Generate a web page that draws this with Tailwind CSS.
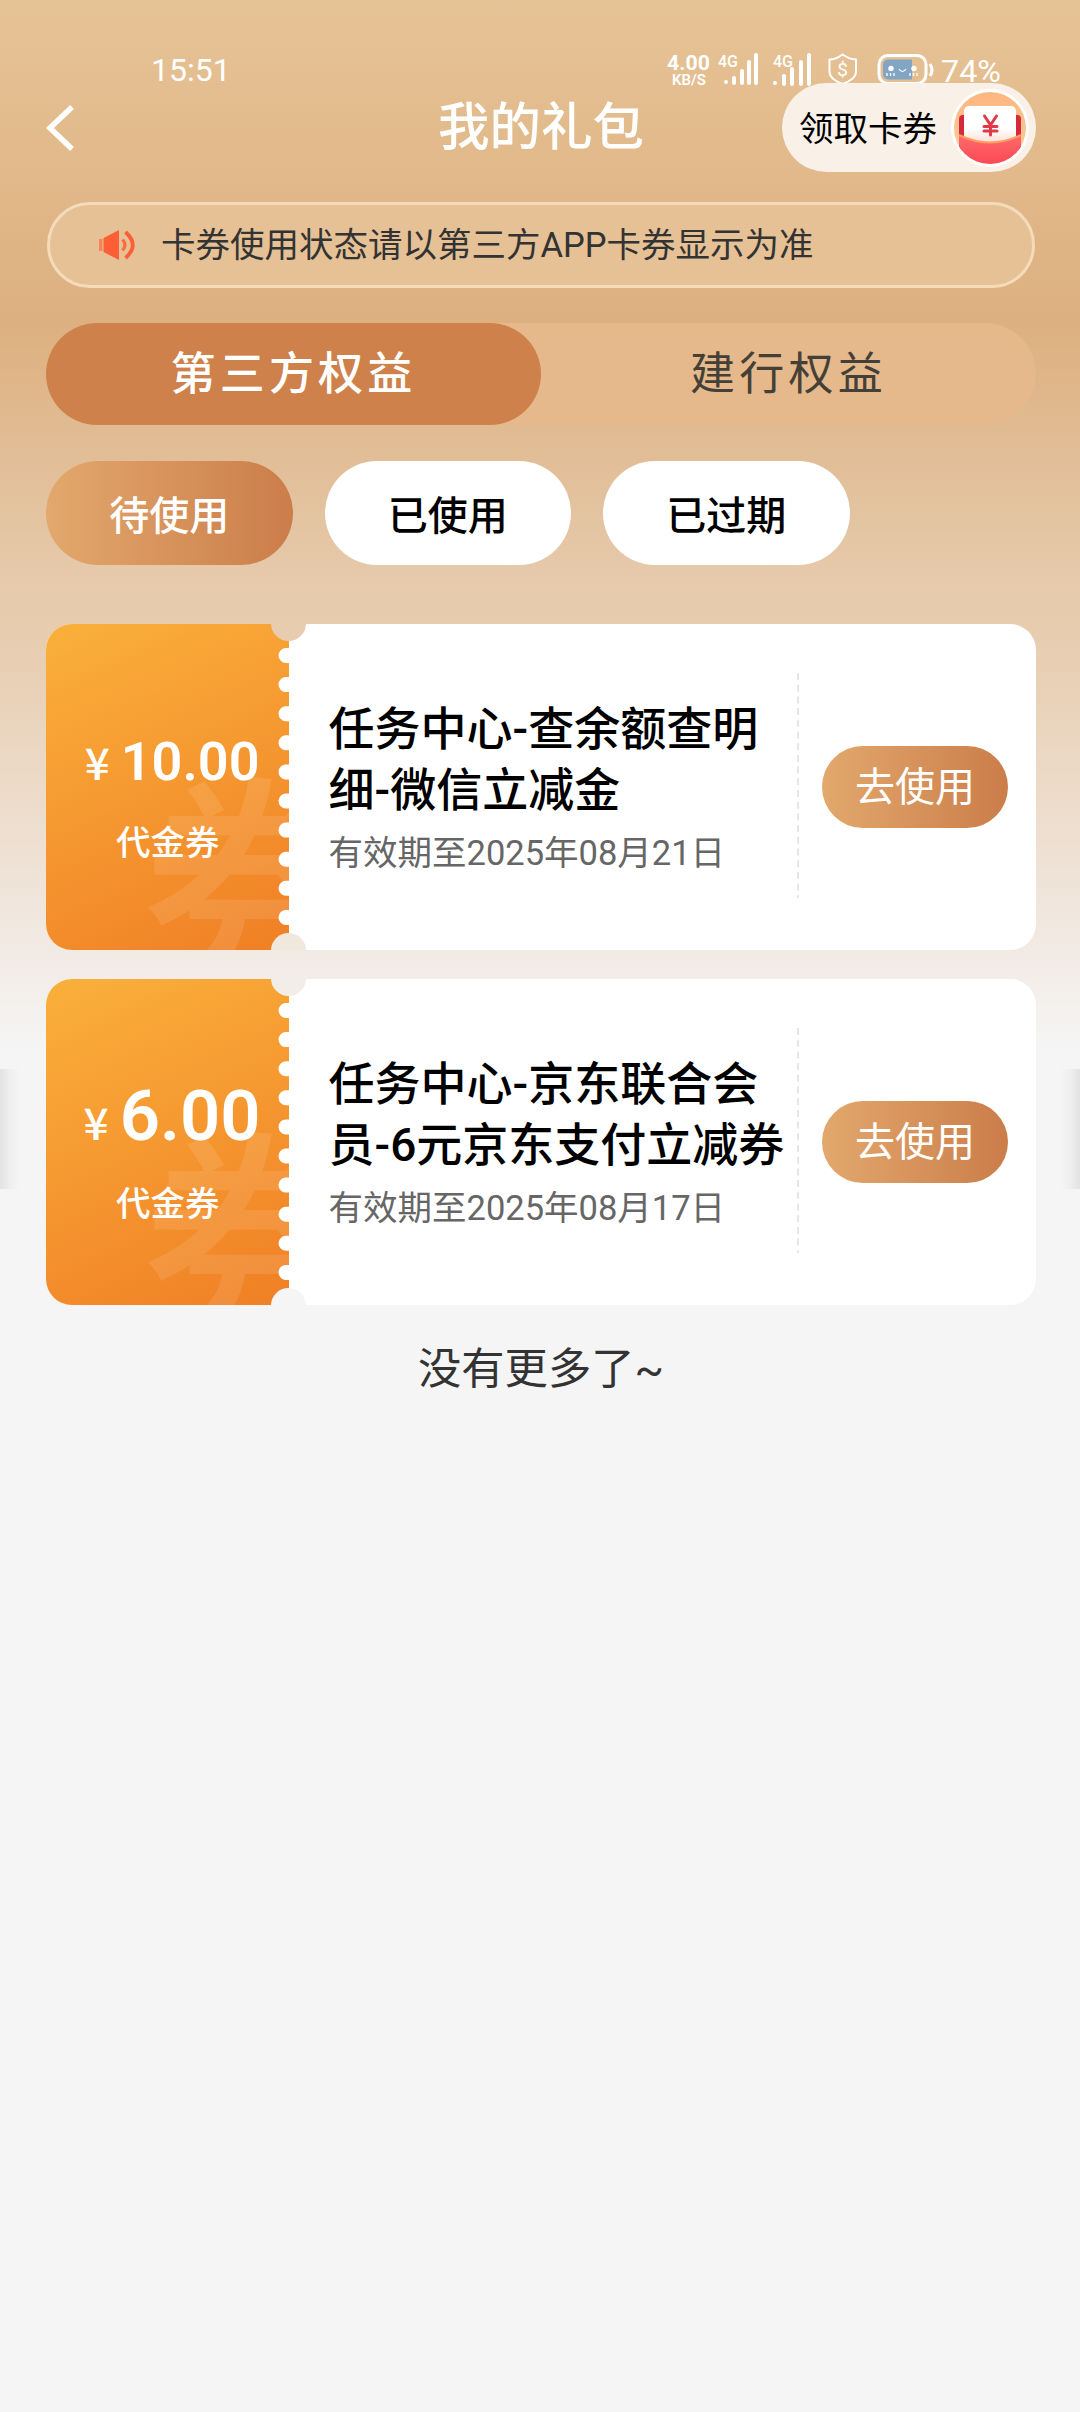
<!DOCTYPE html>
<html lang="zh-CN">
<head>
<meta charset="utf-8">
<title>我的礼包</title>
<script src="https://cdn.jsdelivr.net/npm/@tailwindcss/browser@4"></script>
</head>
<body class="bg-[#f5f5f5]">
<div class="relative isolate flex h-[2412px] w-[1080px] flex-col overflow-hidden bg-[#f5f5f5] font-[Roboto,'Noto_Sans_CJK_SC',sans-serif] text-black">
  <div class="absolute inset-x-0 top-0 -z-10 h-[1070px] bg-[linear-gradient(180deg,#e6c396_0px,#ddb080_322px,#e6cbad_590px,#e7ccae_630px,#efe2d6_870px,#f5f5f5_1050px)]"></div>
  <div class="absolute left-0 top-[1069px] -z-10 h-[120px] w-5 bg-linear-to-r from-[#e3e3e3] via-[#efefef] to-[#f5f5f5]"></div>
  <div class="absolute right-0 top-[1069px] -z-10 h-[120px] w-5 bg-linear-to-l from-[#e3e3e3] via-[#efefef] to-[#f5f5f5]"></div>

  <!-- status bar -->
  <div class="flex h-[83px] items-start justify-between pl-[151px] pr-[78px] pt-[52px] text-white">
    <div class="text-[32px] leading-[37px]">15:51</div>
    <svg class="-mt-1 h-[40px] w-[336px] overflow-visible" viewBox="666 48 336 40" fill="#fff">
      <text x="667" y="70" font-size="20" font-weight="700" textLength="43" lengthAdjust="spacingAndGlyphs">4.00</text>
      <text x="672" y="85" font-size="15.500" font-weight="600" textLength="34" lengthAdjust="spacingAndGlyphs">KB/S</text>
      <text x="718" y="67" font-size="17" font-weight="500" textLength="20" lengthAdjust="spacingAndGlyphs">4G</text>
      <path d="M726 82v.1M734 78v5M742 71v12M749 62v21M756 55v28" stroke="#fff" stroke-width="4" stroke-linecap="round"/>
      <text x="773" y="67" font-size="17" font-weight="500" textLength="20" lengthAdjust="spacingAndGlyphs">4G</text>
      <path d="M775 83v.1M784 76v8M792 69v15M801 62v22M809 55v29" stroke="#fff" stroke-width="4" stroke-linecap="round"/>
      <path d="M842.500 54.500Q850 59.500 856 59.500V72Q856 79 842.500 84Q829.500 79 829.500 72V59.500Q836 59.500 842.500 54.500Z" fill="none" stroke="#fff" stroke-width="2"/>
      <text x="842.500" y="76" font-size="19" text-anchor="middle">$</text>
      <rect x="879" y="55.500" width="47" height="28" rx="9" fill="none" stroke="#fff" stroke-width="3"/>
      <path d="M888 59.500h24v20h-24a5 5 0 0 1-5-5v-10a5 5 0 0 1 5-5Z" fill="#82a5c4"/>
      <path d="M930 64q4 6 0 12" fill="none" stroke="#fff" stroke-width="3"/>
      <circle cx="891" cy="68.500" r="2.700"/><circle cx="914" cy="68.500" r="2.700"/>
      <path d="M899 69q3.500 5 7 0M887 73v3M890.500 73v3M894 73v3M910 73v3M913.500 73v3M917 73v3" fill="none" stroke="#fff" stroke-width="1.300"/>
      <text x="941" y="82" font-size="32" textLength="60" lengthAdjust="spacingAndGlyphs">74%</text>
    </svg>
  </div>

  <!-- header -->
  <div class="grid h-[89px] grid-cols-[1fr_auto_1fr] items-center px-[44px]">
    <svg class="h-[48px] w-[32px]" viewBox="0 0 32 48" fill="none" stroke="#fff" stroke-width="5.500"><path d="M28 3L6 24L28 45"/></svg>
    <div class="pl-[2px] text-[51.500px] font-medium leading-[86px] text-white">我的礼包</div>
    <div class="z-10 flex h-[89px] w-[254px] items-center justify-between justify-self-end rounded-full bg-[#f9f1e8] pl-[17px] pr-[7px]">
      <span class="pt-[3px] text-[34.500px] leading-[89px]">领取卡券</span>
      <svg class="h-[78px] w-[78px]" viewBox="0 0 78 78">
        <defs>
          <clipPath id="disc"><circle cx="39" cy="39" r="36"/></clipPath>
          <linearGradient id="disc-bg" x1="0" y1="0" x2="0" y2="1"><stop stop-color="#fdb57c"/><stop offset="1" stop-color="#fed0a4"/></linearGradient>
          <linearGradient id="pocket" x1="0" y1="0" x2="0" y2="1"><stop stop-color="#ff6a6c"/><stop offset="1" stop-color="#fb4353"/></linearGradient>
          <linearGradient id="note" x1="0" y1="0" x2="0" y2="1"><stop offset=".5" stop-color="#fff"/><stop offset=".85" stop-color="#ffdcd5"/></linearGradient>
        </defs>
        <circle cx="39" cy="39" r="39" fill="#fff"/>
        <g clip-path="url(#disc)">
          <rect width="78" height="78" fill="url(#disc-bg)"/>
          <rect x="8" y="26" width="62" height="36" rx="4" fill="#d42a3c"/>
          <rect x="13" y="17" width="52" height="44" rx="5" fill="url(#note)"/>
          <path d="M8 46Q39 61 70 46V80H8Z" fill="url(#pocket)"/>
          <path d="M8 46Q39 61 70 46" fill="none" stroke="#ff9b5b" stroke-width="2"/>
          <path d="M33.500 27l6 9 6-9M39.500 36v10M33 37.500h13M33 42h13" fill="none" stroke="#e03a48" stroke-width="3" stroke-linecap="round"/>
        </g>
      </svg>
    </div>
  </div>

  <!-- notice -->
  <div class="ml-[47px] mr-[45px] mt-[30px] flex h-[86px] items-center rounded-full border-3 border-[#f3dbbc] bg-[#e6c196] pl-[47px]">
    <svg class="h-[32px] w-[40px]" viewBox="0 0 40 32">
      <path d="M2 10h3.500v12H2z" fill="#f98257"/><path d="M6.500 9L22 1v30L6.500 23Z" fill="#fc5f36"/>
      <path d="M25.500 10.500q5 5.500 0 11" fill="none" stroke="#fc6c43" stroke-width="3.200"/><path d="M28.500 3q14.500 13 0 26" fill="none" stroke="#fc5f36" stroke-width="3.800"/>
    </svg>
    <span class="ml-[24px] text-[34.500px] leading-[80px] text-[#333]">卡券使用状态请以第三方APP卡券显示为准</span>
  </div>

  <!-- tabs -->
  <div class="ml-[46px] mr-[44px] mt-[35px] flex h-[102px] rounded-full bg-[#e5b98b] text-[45px] leading-[104px] tracking-[4.200px]">
    <div class="flex-1 rounded-full bg-[#ce814a] text-center font-medium text-white">第三方权益</div>
    <div class="flex-1 text-center text-[#444038]">建行权益</div>
  </div>

  <!-- filters -->
  <div class="mx-[46px] mt-[36px] flex gap-[32px] text-center text-[40px] font-medium leading-[111px]">
    <div class="h-[104px] w-[246.500px] rounded-full bg-linear-to-r from-[#e2a86c] to-[#cb7d4a] text-white">待使用</div>
    <div class="h-[104px] w-[246.500px] rounded-full bg-white">已使用</div>
    <div class="h-[104px] w-[246.500px] rounded-full bg-white">已过期</div>
  </div>

  <!-- coupons -->
  <div class="ml-[46px] mr-[44px] mt-[59px] flex flex-col gap-[29px]">
    <div class="relative flex h-[326px] overflow-hidden rounded-[26px] bg-white">
      <div class="relative flex w-[242.500px] flex-col overflow-hidden bg-linear-[155deg,#fab03b,#f07f25] text-white">
        <div class="absolute left-[95px] top-[155px] text-[228px] font-medium leading-[228px] text-white/10">券</div>
        <div class="mt-[102px] flex h-[70px] items-baseline justify-end pr-[29px] font-medium leading-[70px]"><span class="mr-[11px] font-['Noto_Sans_CJK_SC'] text-[44px] font-medium">¥</span><span class="text-[54px] font-semibold">10.00</span></div>
        <div class="mt-[22px] pl-px text-center text-[34.500px] font-medium leading-[50px]">代金券</div>
      </div>
      <svg class="absolute left-[225px] top-0 h-[326px] w-[36px]" viewBox="0 0 36 326"><path d="M15 31.500h12M15 60.600h12M15 89.700h12M15 118.800h12M15 147.900h12M15 177h12M15 206.100h12M15 235.200h12M15 264.300h12M15 293.400h12" stroke="#fff" stroke-width="15" stroke-linecap="round"/><circle cx="17.500" cy="-.5" r="17.500" fill="#e7ccb0"/><circle cx="17.500" cy="326.500" r="17.500" fill="#f0e7dd"/></svg>
      <div class="flex flex-1 flex-col pl-[40px] pt-[75px]">
        <div class="whitespace-nowrap text-[46px] font-medium leading-[61px]">任务中心-查余额查明<br>细-微信立减金</div>
        <div class="mt-[6px] text-[34.500px] leading-[52px] text-[#666]">有效期至2025年08月21日</div>
      </div>
      <svg class="mt-[49px] h-[225px] w-[2px]" viewBox="0 0 2 225"><path d="M1 0v225" stroke="#e6e6e6" stroke-width="2" stroke-dasharray="7 4.700"/></svg>
      <div class="ml-[23px] mr-[28px] mt-[122px] h-[82px] w-[186px] rounded-full bg-linear-to-r from-[#e2a86c] to-[#cb7d4a] text-center text-[40px] leading-[83px] text-white">去使用</div>
    </div>

    <div class="relative flex h-[326px] overflow-hidden rounded-[26px] bg-white">
      <div class="relative flex w-[242.500px] flex-col overflow-hidden bg-linear-[155deg,#fab03b,#f07f25] text-white">
        <div class="absolute left-[95px] top-[155px] text-[228px] font-medium leading-[228px] text-white/10">券</div>
        <div class="mt-[102px] flex h-[70px] items-baseline justify-end pr-[28px] font-medium leading-[71px]"><span class="mr-[11px] font-['Noto_Sans_CJK_SC'] text-[44px] font-medium">¥</span><span class="text-[70.500px] font-semibold">6.00</span></div>
        <div class="mt-[28px] pl-px text-center text-[34.500px] font-medium leading-[50px]">代金券</div>
      </div>
      <svg class="absolute left-[225px] top-0 h-[326px] w-[36px]" viewBox="0 0 36 326"><path d="M15 31.500h12M15 60.600h12M15 89.700h12M15 118.800h12M15 147.900h12M15 177h12M15 206.100h12M15 235.200h12M15 264.300h12M15 293.400h12" stroke="#fff" stroke-width="15" stroke-linecap="round"/><circle cx="17.500" cy="-.5" r="17.500" fill="#f2ede7"/><circle cx="17.500" cy="326.500" r="17.500" fill="#f5f5f5"/></svg>
      <div class="flex flex-1 flex-col pl-[40px] pt-[75px]">
        <div class="whitespace-nowrap text-[46px] font-medium leading-[61px]">任务中心-京东联合会<br>员-6元京东支付立减券</div>
        <div class="mt-[6px] text-[34.500px] leading-[52px] text-[#666]">有效期至2025年08月17日</div>
      </div>
      <svg class="mt-[49px] h-[225px] w-[2px]" viewBox="0 0 2 225"><path d="M1 0v225" stroke="#e6e6e6" stroke-width="2" stroke-dasharray="7 4.700"/></svg>
      <div class="ml-[23px] mr-[28px] mt-[122px] h-[82px] w-[186px] rounded-full bg-linear-to-r from-[#e2a86c] to-[#cb7d4a] text-center text-[40px] leading-[83px] text-white">去使用</div>
    </div>
  </div>

  <div class="mt-[35px] pl-[2px] text-center text-[43.300px] leading-[60px] text-[#333]">没有更多了~</div>
</div>
</body>
</html>
